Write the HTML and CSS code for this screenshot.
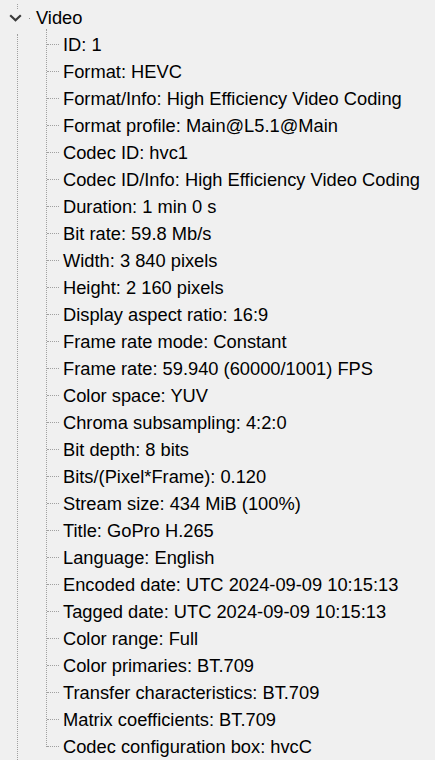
FILE: index.html
```html
<!DOCTYPE html>
<html>
<head>
<meta charset="utf-8">
<link rel="stylesheet" href="styles.css">
</head>
<body>
<div class="tree">
  <div class="node">
    <div class="root-row">
      <span class="toggle"><svg width="13" height="8" viewBox="0 0 13 8"><path d="M1.2 1.2 L6.5 6.3 L11.8 1.2" fill="none" stroke="#3a3a3a" stroke-width="2.2"/></svg></span>
      <span class="dot"></span>
      <span class="label">Video</span>
    </div>
    <ul class="children">
      <li class="leaf">ID: 1</li>
      <li class="leaf">Format: HEVC</li>
      <li class="leaf">Format/Info: High Efficiency Video Coding</li>
      <li class="leaf">Format profile: Main@L5.1@Main</li>
      <li class="leaf">Codec ID: hvc1</li>
      <li class="leaf">Codec ID/Info: High Efficiency Video Coding</li>
      <li class="leaf">Duration: 1 min 0 s</li>
      <li class="leaf">Bit rate: 59.8 Mb/s</li>
      <li class="leaf">Width: 3 840 pixels</li>
      <li class="leaf">Height: 2 160 pixels</li>
      <li class="leaf">Display aspect ratio: 16:9</li>
      <li class="leaf">Frame rate mode: Constant</li>
      <li class="leaf">Frame rate: 59.940 (60000/1001) FPS</li>
      <li class="leaf">Color space: YUV</li>
      <li class="leaf">Chroma subsampling: 4:2:0</li>
      <li class="leaf">Bit depth: 8 bits</li>
      <li class="leaf">Bits/(Pixel*Frame): 0.120</li>
      <li class="leaf">Stream size: 434 MiB (100%)</li>
      <li class="leaf">Title: GoPro H.265</li>
      <li class="leaf">Language: English</li>
      <li class="leaf">Encoded date: UTC 2024-09-09 10:15:13</li>
      <li class="leaf">Tagged date: UTC 2024-09-09 10:15:13</li>
      <li class="leaf">Color range: Full</li>
      <li class="leaf">Color primaries: BT.709</li>
      <li class="leaf">Transfer characteristics: BT.709</li>
      <li class="leaf">Matrix coefficients: BT.709</li>
      <li class="leaf">Codec configuration box: hvcC</li>
    </ul>
  </div>
</div>
</body>
</html>
```
FILE: styles.css
```css
html, body {
  margin: 0;
  padding: 0;
  background: #f0f0f0;
}
body {
  width: 435px;
  height: 760px;
  overflow: hidden;
  font-family: "Liberation Sans", Arial, sans-serif;
  font-size: 18.3px;
  color: #000;
}
.tree {
  position: relative;
  height: 760px;
}
.tree::before,
.tree::after {
  content: "";
  position: absolute;
  left: 17px;
  border-left: 1px dotted #a0a0a0;
}
.tree::before {
  top: 0;
  height: 5px;
}
.tree::after {
  top: 30px;
  bottom: 0;
}
.root-row {
  display: flex;
  align-items: center;
  height: 27px;
  margin-top: 4px;
}
.toggle {
  display: flex;
  width: 13px;
  height: 8px;
  margin-left: 9px;
}
.dot {
  width: 1px;
  height: 1px;
  background: #909090;
  margin-left: 7px;
  margin-top: 1px;
}
.label {
  margin-left: 6px;
}
.children {
  list-style: none;
  margin: 0 0 0 46px;
  padding: 0;
  position: relative;
}
.children::before {
  content: "";
  position: absolute;
  left: 0;
  top: -2px;
  bottom: 13px;
  border-left: 1px dotted #a0a0a0;
}
.leaf {
  position: relative;
  height: 27px;
  display: flex;
  align-items: center;
  padding-left: 17px;
  white-space: nowrap;
}
.leaf::before {
  content: "";
  position: absolute;
  left: 1px;
  top: 13px;
  width: 12px;
  border-top: 1px dotted #a0a0a0;
}
```
